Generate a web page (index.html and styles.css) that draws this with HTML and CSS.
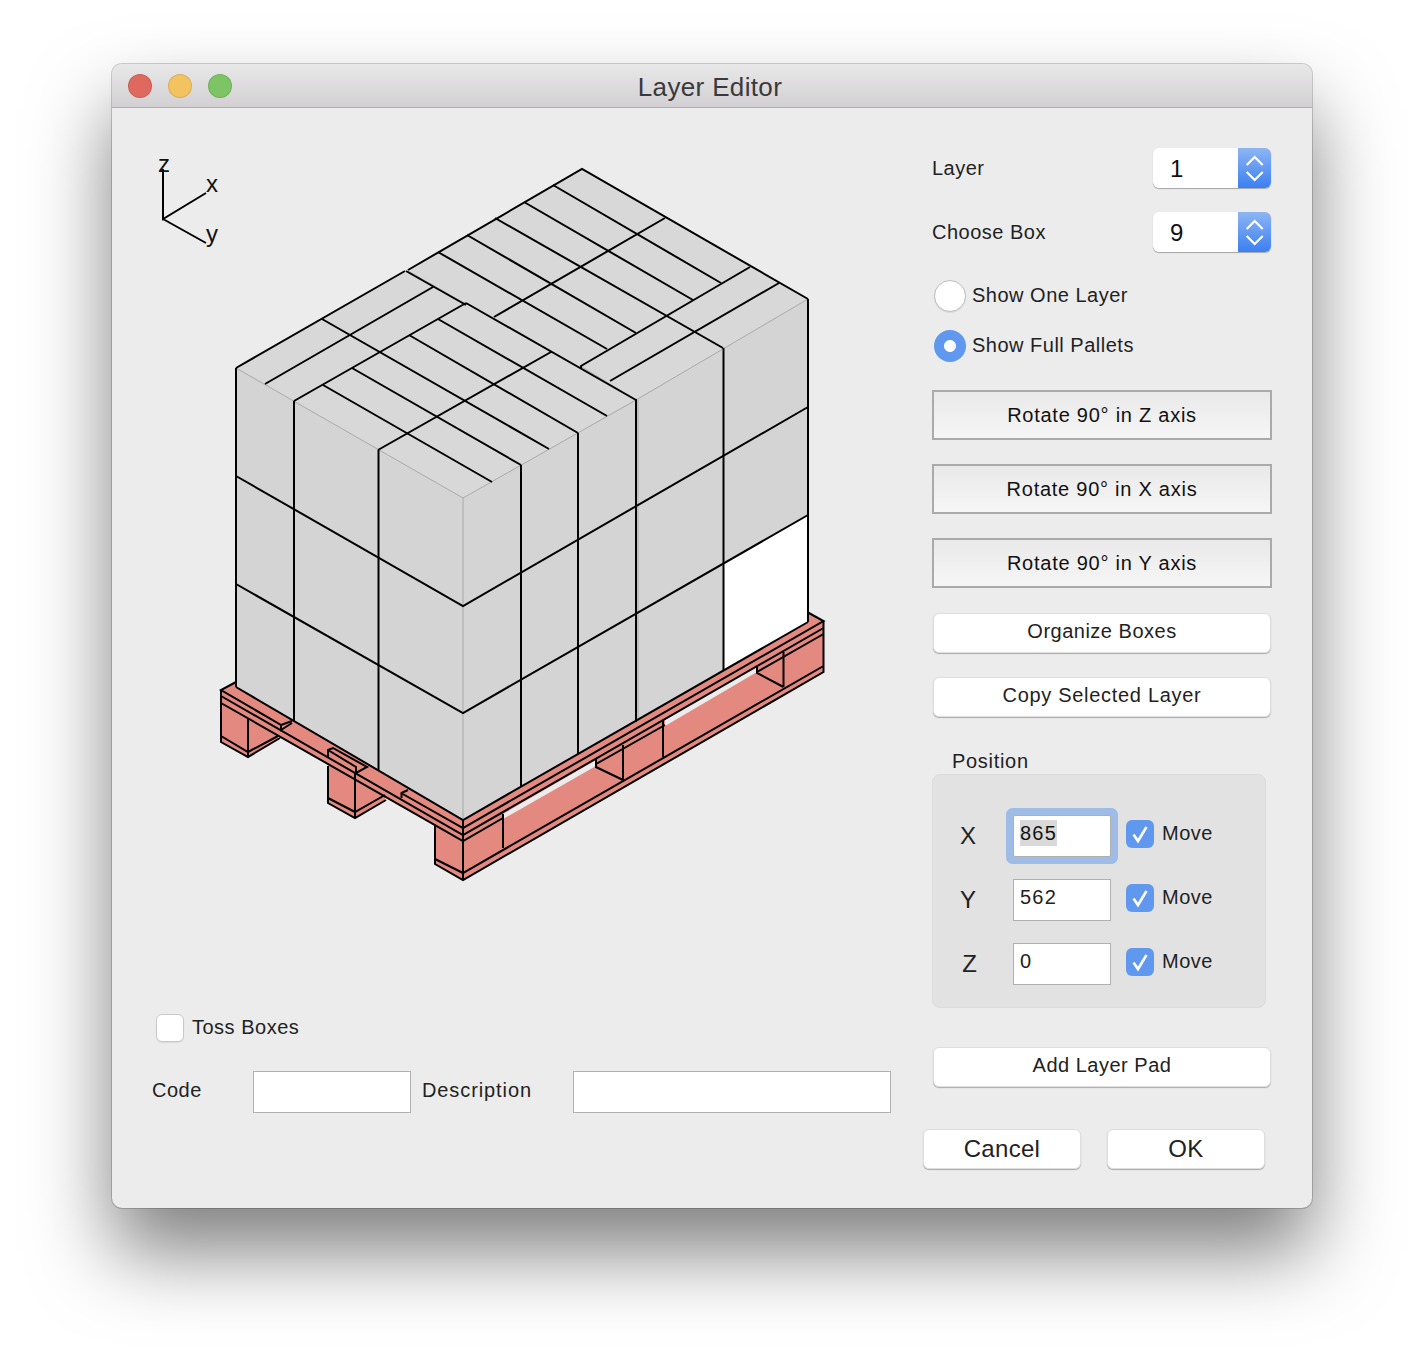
FILE: index.html
```html
<!DOCTYPE html>
<html lang="en">
<head>
<meta charset="utf-8">
<title>Layer Editor</title>
<link rel="stylesheet" href="styles.css">
</head>
<body>
<div class="window">
  <header class="titlebar">
    <div class="lights">
      <span class="light red"></span>
      <span class="light yellow"></span>
      <span class="light green"></span>
    </div>
    <div class="title">Layer Editor</div>
  </header>
  <div class="content">
    <section class="left">
      <svg class="scene" viewBox="112 108 820 892" width="820" height="892" xmlns="http://www.w3.org/2000/svg">
        <!-- axes -->
        <path class="ln" d="M163 169V219L206 193M163 219L206 243"/>
        <text class="axis" x="158" y="172">z</text>
        <text class="axis" x="206" y="192">x</text>
        <text class="axis" x="206" y="242">y</text>

        <!-- pallet fills -->
        <path class="sal" d="M236 682L221 690V742L248 757L278 739V736L328 764.500V803L355 818L385 800V797L435 825.500V864L463 880L823.500 672V621L808 612.500Z"/>
        <path class="gap" d="M757 666L665 720V726L757 672Z"/>
        <path class="gap" d="M596 760L503 814V819L596 766Z"/>

        <!-- boxes -->
        <path class="top" d="M236 368L582 169L808 299L463 498Z"/>
        <path class="side" d="M236 368L463 498V820L236 687Z"/>
        <path class="side" d="M463 498L808 299V622L463 820Z"/>
        <path class="white" d="M723 564L808 515V622L723 670Z"/>

        <!-- grey edges -->
        <path class="thin" d="M236 368L463 498L636 400L808 299M463 498V820M408 271L466 304M582 367L636 400M638 400V722"/>

        <!-- outline of the top -->
        <path class="ln" d="M236 368L405 271M408 270L582 169L808 299"/>
        <!-- top block -->
        <path class="ln" d="M665 218L494 317M553 185L721 283M524 202L693 300M495 218L723 348M467 235L636 333M438 252L607 349"/>
        <!-- notch and front blocks -->
        <path class="ln" d="M406 271L466 305M466 303L636 400M466 303L294 401M433 287L265 384M378 450L551 352"/>
        <path class="ln" d="M322 319L549 449M438 319L607 416M409 335L578 433M352 368L521 465M323 385L492 482"/>
        <!-- right blocks -->
        <path class="ln" d="M581 368V366L750 267M610 381L779 283"/>

        <!-- verticals -->
        <path class="ln" d="M236 368V687M294 401V721M378.500 450V771M521 465V787M578 433V754M636 399V722M723.500 348V670M808 299V622"/>
        <!-- layer seams -->
        <path class="ln" d="M236 476L463 606L808 407M236 584L463 713L808 515"/>
        <!-- bottom of the stack -->
        <path class="ln" d="M236 687L463 820L808 622"/>

        <!-- pallet front-left -->
        <path class="ln" d="M236 682L221 690L281 725V730L292 723M281 725L292 721"/>
        <path class="ln" d="M328 757V750L333 748L367 767L356 773V767L328 750M401.500 798V793L408 790"/>
        <path class="ln" d="M401 793L463 828L823.500 621L808 612.500"/>
        <path class="ln" d="M221 696L463 835L823.500 628M221 703L463 841L503 818M596 764L665 725M757 672L823.500 634"/>
        <path class="ln" d="M221 690V742L248 757L280 738M221 736L248 752L278 736M248 719V757"/>
        <path class="ln" d="M328 766V803L355 818L386 800M328 798L355 812L385 795M355 773V818"/>
        <path class="ln" d="M435 826V864L463 880L823.500 672V621M435 859L463 873L823.500 666M463 820V880"/>
        <path class="ln" d="M503 814V848M596 758V767L623 780M623 745V780M663 720V757M757 667V673L783.500 687M783.500 652V687"/>
      </svg>
      <label class="toss">
        <span class="check"></span>
        <span class="text">Toss Boxes</span>
      </label>
      <div class="code-row">
        <span class="text code-label">Code</span>
        <span class="field code-field"></span>
        <span class="text desc-label">Description</span>
        <span class="field desc-field"></span>
      </div>
    </section>

    <aside class="right">
      <div class="stepper-row">
        <span class="text">Layer</span>
        <div class="stepper">
          <span class="stepper-value">1</span>
          <span class="stepper-arrows">
            <svg viewBox="0 0 33 40" width="33" height="40"><path d="M8.700 17L16.700 9L24.700 17M8.700 24L16.700 32L24.700 24"/></svg>
          </span>
        </div>
      </div>
      <div class="stepper-row gap-24">
        <span class="text">Choose Box</span>
        <div class="stepper">
          <span class="stepper-value">9</span>
          <span class="stepper-arrows">
            <svg viewBox="0 0 33 40" width="33" height="40"><path d="M8.700 17L16.700 9L24.700 17M8.700 24L16.700 32L24.700 24"/></svg>
          </span>
        </div>
      </div>
      <div class="radio-row gap-28">
        <span class="radio"></span>
        <span class="text">Show One Layer</span>
      </div>
      <div class="radio-row gap-18">
        <span class="radio on"></span>
        <span class="text">Show Full Pallets</span>
      </div>
      <div class="sq-btn gap-28">Rotate 90° in Z axis</div>
      <div class="sq-btn gap-24">Rotate 90° in X axis</div>
      <div class="sq-btn gap-24">Rotate 90° in Y axis</div>
      <div class="btn wide gap-25">Organize Boxes</div>
      <div class="btn wide gap-24 copy">Copy Selected Layer</div>
      <div class="text pos-label">Position</div>
      <div class="pos-box">
        <span class="axis-label">X</span>
        <span class="field pos-field focus"><span class="sel">865</span></span>
        <span class="check on"><svg viewBox="0 0 28 28" width="28" height="28"><path d="M7.500 14.500L12 21L20.500 7"/></svg></span>
        <span class="text">Move</span>
        <span class="axis-label">Y</span>
        <span class="field pos-field">562</span>
        <span class="check on"><svg viewBox="0 0 28 28" width="28" height="28"><path d="M7.500 14.500L12 21L20.500 7"/></svg></span>
        <span class="text">Move</span>
        <span class="axis-label z-label">Z</span>
        <span class="field pos-field">0</span>
        <span class="check on"><svg viewBox="0 0 28 28" width="28" height="28"><path d="M7.500 14.500L12 21L20.500 7"/></svg></span>
        <span class="text">Move</span>
      </div>
      <div class="btn wide add-pad">Add Layer Pad</div>
      <div class="footer">
        <div class="btn big">Cancel</div>
        <div class="btn big">OK</div>
      </div>
    </aside>
  </div>
</div>
</body>
</html>
```

FILE: styles.css
```css
* { box-sizing: border-box; }

html, body { margin: 0; height: 100%; }

body {
  background: #fff;
  padding: 64px 112px 0;
  font-family: "Liberation Sans", Arial, sans-serif;
  color: #222;
  overflow: hidden;
}

.window {
  width: 1200px;
  height: 1144px;
  border-radius: 10px;
  background: #ececec;
  box-shadow: 0 0 0 1px rgba(0, 0, 0, 0.18), 0 44px 80px rgba(0, 0, 0, 0.5);
  overflow: hidden;
  display: flex;
  flex-direction: column;
}

.titlebar {
  height: 44px;
  flex: none;
  display: flex;
  align-items: center;
  position: relative;
  background: linear-gradient(#e9e8e9, #d2d0d2);
  border-bottom: 1px solid #b1afb1;
  padding-left: 16px;
}

.lights { display: flex; gap: 16px; }

.light {
  width: 24px;
  height: 24px;
  border-radius: 50%;
  border: 1px solid rgba(0, 0, 0, 0.1);
}

.red { background: #e0695f; }
.yellow { background: #f3c261; }
.green { background: #7dc464; }

.title {
  position: absolute;
  left: 0;
  right: 4px;
  top: 7px;
  text-align: center;
  font-size: 26px;
  letter-spacing: 0.35px;
  line-height: 32px;
  color: #3b393b;
}

.content { flex: 1; display: flex; min-height: 0; }

.left { width: 820px; flex: none; }

.scene { display: block; }

.ln { fill: none; stroke: #000; stroke-width: 2; stroke-linejoin: miter; }
.thin { fill: none; stroke: #a9a9a9; stroke-width: 1; }
.sal { fill: #e38980; }
.gap { fill: #ececec; }
.top { fill: #d8d8d8; }
.side { fill: #d4d4d4; }
.white { fill: #fff; }
.axis { font-size: 24px; font-family: "Liberation Sans", Arial, sans-serif; fill: #111; }

.text { font-size: 20px; line-height: 24px; color: #222; letter-spacing: 0.5px; }

.toss {
  display: flex;
  align-items: center;
  gap: 8px;
  margin: 14px 0 0 44px;
}

.toss .text { margin-top: -2px; }

.check {
  width: 28px;
  height: 28px;
  flex: none;
  border-radius: 6px;
  background: #fff;
  border: 1px solid #c9c9c9;
  box-shadow: 0 1px 1px rgba(0, 0, 0, 0.08);
}

.check.on { background: #5f98ee; border: none; box-shadow: none; }
.check svg { display: block; }
.check path { fill: none; stroke: #fff; stroke-width: 2.6; }

.code-row {
  display: flex;
  align-items: center;
  margin: 29px 0 0 40px;
}

.code-label { width: 101px; margin-top: -4px; }
.desc-label { width: 151px; margin: -4px 0 0 11px; letter-spacing: 0.9px; }

.field {
  display: block;
  height: 42px;
  background: #fff;
  border: 1px solid #b0b0b0;
}

.code-field { width: 158px; }
.desc-field { width: 318px; }

.right { width: 340px; flex: none; padding-top: 40px; }

.gap-18 { margin-top: 18px; }
.gap-24 { margin-top: 24px; }
.gap-25 { margin-top: 25px; }
.gap-28 { margin-top: 28px; }

.stepper-row {
  display: flex;
  align-items: center;
  justify-content: space-between;
  height: 40px;
  padding-right: 1px;
}

.stepper {
  width: 118px;
  height: 40px;
  display: flex;
  border-radius: 6px;
  background: #fff;
  box-shadow: 0 1px 1px rgba(0, 0, 0, 0.3);
  overflow: hidden;
}

.stepper-value {
  flex: 1;
  font-size: 24px;
  line-height: 42px;
  padding-left: 17px;
  color: #111;
}

.stepper-arrows {
  width: 33px;
  background: linear-gradient(#8db6f3, #3b7ff0);
}

.stepper-arrows svg { display: block; }
.stepper-arrows path { fill: none; stroke: #fff; stroke-width: 2.2; }

.radio-row {
  display: flex;
  align-items: center;
  gap: 6px;
  height: 32px;
  padding-left: 2px;
}

.radio-row .text { margin-top: -2px; }

.radio {
  width: 32px;
  height: 32px;
  border-radius: 50%;
  background: #fff;
  border: 1px solid #bdbdbd;
  box-shadow: 0 1px 1px rgba(0, 0, 0, 0.08);
}

.radio.on {
  border: none;
  box-shadow: none;
  background: radial-gradient(circle, #fff 0 5.5px, #5f98ee 6.5px);
}

.sq-btn {
  height: 50px;
  display: flex;
  align-items: center;
  justify-content: center;
  border: 2px solid #aaa;
  background: linear-gradient(#e9e9e9, #f6f6f6);
  font-size: 20px;
  letter-spacing: 0.75px;
  color: #111;
}

.btn {
  display: flex;
  align-items: center;
  justify-content: center;
  height: 40px;
  padding-bottom: 4px;
  background: #fff;
  border: 1px solid #dedede;
  border-radius: 6px;
  box-shadow: 0 1px 1px rgba(0, 0, 0, 0.28);
  font-size: 20px;
  letter-spacing: 0.5px;
  color: #222;
}

.wide { width: 338px; margin-left: 1px; }

.copy { letter-spacing: 0.7px; }

.pos-label { height: 24px; margin: 32px 0 1px 20px; letter-spacing: 0.7px; }

.pos-box {
  width: 334px;
  height: 234px;
  border-radius: 8px;
  background: #e2e2e2;
  border: 1px solid #dcdcdc;
  padding: 40px 0 0 26px;
  display: grid;
  grid-template-columns: 18px 134px 43px auto;
  row-gap: 22px;
  grid-auto-rows: 42px;
  justify-content: start;
}

.axis-label {
  font-size: 24px;
  line-height: 42px;
  text-align: center;
  color: #222;
}

.z-label { padding-left: 3px; }

.pos-field {
  margin-left: 36px;
  width: 98px;
  font-size: 20px;
  letter-spacing: 1.2px;
  line-height: 26px;
  padding: 4px 0 0 6px;
  color: #222;
}

.pos-box .check { margin: 5px 0 0 15px; }
.pos-box .text { line-height: 36px; margin-left: 8px; }

.focus { box-shadow: 0 0 0 7px #9ebce5; border-radius: 2px; color: #111; }

.sel { display: inline-block; background: #d9d9d9; }

.add-pad { margin-top: 39px; }

.footer {
  display: flex;
  gap: 26px;
  margin: 42px 0 0 -9px;
}

.big { width: 158px; font-size: 24px; letter-spacing: 0.3px; padding-bottom: 0; }
```
